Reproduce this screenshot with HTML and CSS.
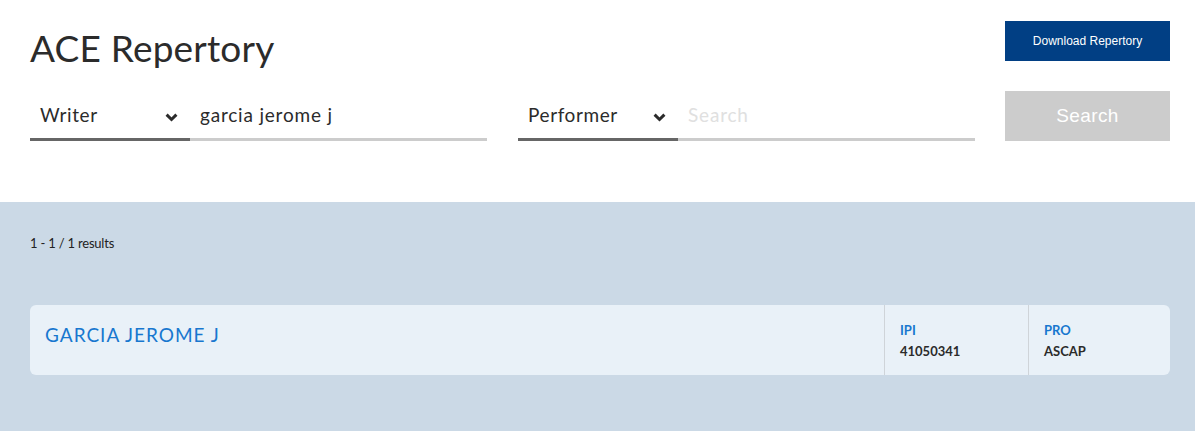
FILE: index.html
```html
<!DOCTYPE html>
<html>
<head>
<meta charset="utf-8">
<link rel="stylesheet" href="styles.css">
</head>
<body>
<header class="top">
  <div class="title-row">
    <h1 class="title">ACE Repertory</h1>
    <button class="btn-download">Download Repertory</button>
  </div>
  <div class="search-row">
    <div class="field">
      <div class="select">Writer<svg class="chev" viewBox="0 0 13 9" width="13" height="9"><path d="M1.6 1.6 L6.5 6.5 L11.4 1.6" fill="none" stroke="#2b2b2b" stroke-width="3"/></svg></div>
      <div class="input">garcia jerome j</div>
    </div>
    <div class="field">
      <div class="select">Performer<svg class="chev" viewBox="0 0 13 9" width="13" height="9"><path d="M1.6 1.6 L6.5 6.5 L11.4 1.6" fill="none" stroke="#2b2b2b" stroke-width="3"/></svg></div>
      <div class="input placeholder">Search</div>
    </div>
    <button class="btn-search">Search</button>
  </div>
</header>
<main class="results">
  <div class="count">1 - 1 / 1 results</div>
  <div class="card">
    <div class="card-name">GARCIA JEROME J</div>
    <div class="card-col">
      <div class="label">IPI</div>
      <div class="value">41050341</div>
    </div>
    <div class="card-col">
      <div class="label">PRO</div>
      <div class="value">ASCAP</div>
    </div>
  </div>
</main>
</body>
</html>
```

FILE: styles.css
```css
* { box-sizing: border-box; }
html, body { margin: 0; padding: 0; }
body {
  font-family: "Lato", "Liberation Sans", sans-serif;
  color: #2b2b2b;
  background: #cbd9e6;
  width: 1195px;
  height: 431px;
  overflow: hidden;
}
.top {
  background: #fff;
  height: 202px;
  padding: 21px 25px 0 30px;
}
.title-row {
  display: flex;
  justify-content: space-between;
  align-items: flex-start;
  height: 70px;
}
.title {
  margin: 5px 0 0 0;
  font-size: 37px;
  font-weight: 400;
  line-height: 44px;
  color: #2b2b2b;
  letter-spacing: 0.2px;
}
.btn-download {
  width: 165px;
  height: 40px;
  background: #013f84;
  color: #fff;
  border: none;
  font-family: "Liberation Sans", sans-serif;
  font-size: 12px;
  padding: 0;
}
.search-row {
  display: flex;
  align-items: flex-start;
}
.field {
  display: flex;
  width: 457px;
  margin-right: 31px;
}
.field + .field { margin-right: 30px; }
.select {
  width: 160px;
  height: 50px;
  border-bottom: 3px solid #666;
  display: flex;
  align-items: center;
  justify-content: space-between;
  padding: 0 12px 0 10px;
  font-size: 19px;
  letter-spacing: 0.6px;
  color: #2b2b2b;
}
.chev { margin-top: 5px; }
.input {
  flex: 1;
  height: 50px;
  border-bottom: 3px solid #ccc;
  display: flex;
  align-items: center;
  padding-left: 10px;
  font-size: 19px;
  letter-spacing: 0.8px;
  color: #2b2b2b;
}
.input.placeholder { color: #e0e0e0; }
.btn-search {
  width: 165px;
  height: 50px;
  background: #cccccc;
  color: #fff;
  border: none;
  font-family: "Liberation Sans", sans-serif;
  font-size: 19px;
  letter-spacing: 0.4px;
  padding: 0;
}
.results {
  padding: 33px 25px 0 30px;
}
.count {
  font-size: 13px;
  color: #222;
  height: 70px;
  letter-spacing: -0.2px;
}
.card {
  display: flex;
  height: 70px;
  background: #e9f1f8;
  border-radius: 6px;
}
.card-name {
  flex: 1;
  padding: 18px 15px;
  font-size: 19px;
  letter-spacing: 1px;
  color: #1877cf;
  border-right: 1px solid #cfd4d9;
}
.card-col {
  width: 143px;
  padding: 17px 15px;
}
.card-col + .card-col {
  width: 142px;
  border-left: 1px solid #cfd4d9;
}
.label {
  font-size: 13px;
  font-weight: 700;
  color: #1877cf;
  line-height: 16px;
}
.value {
  margin-top: 5px;
  font-size: 13px;
  font-weight: 700;
  color: #2b2b2b;
  line-height: 16px;
}
```
